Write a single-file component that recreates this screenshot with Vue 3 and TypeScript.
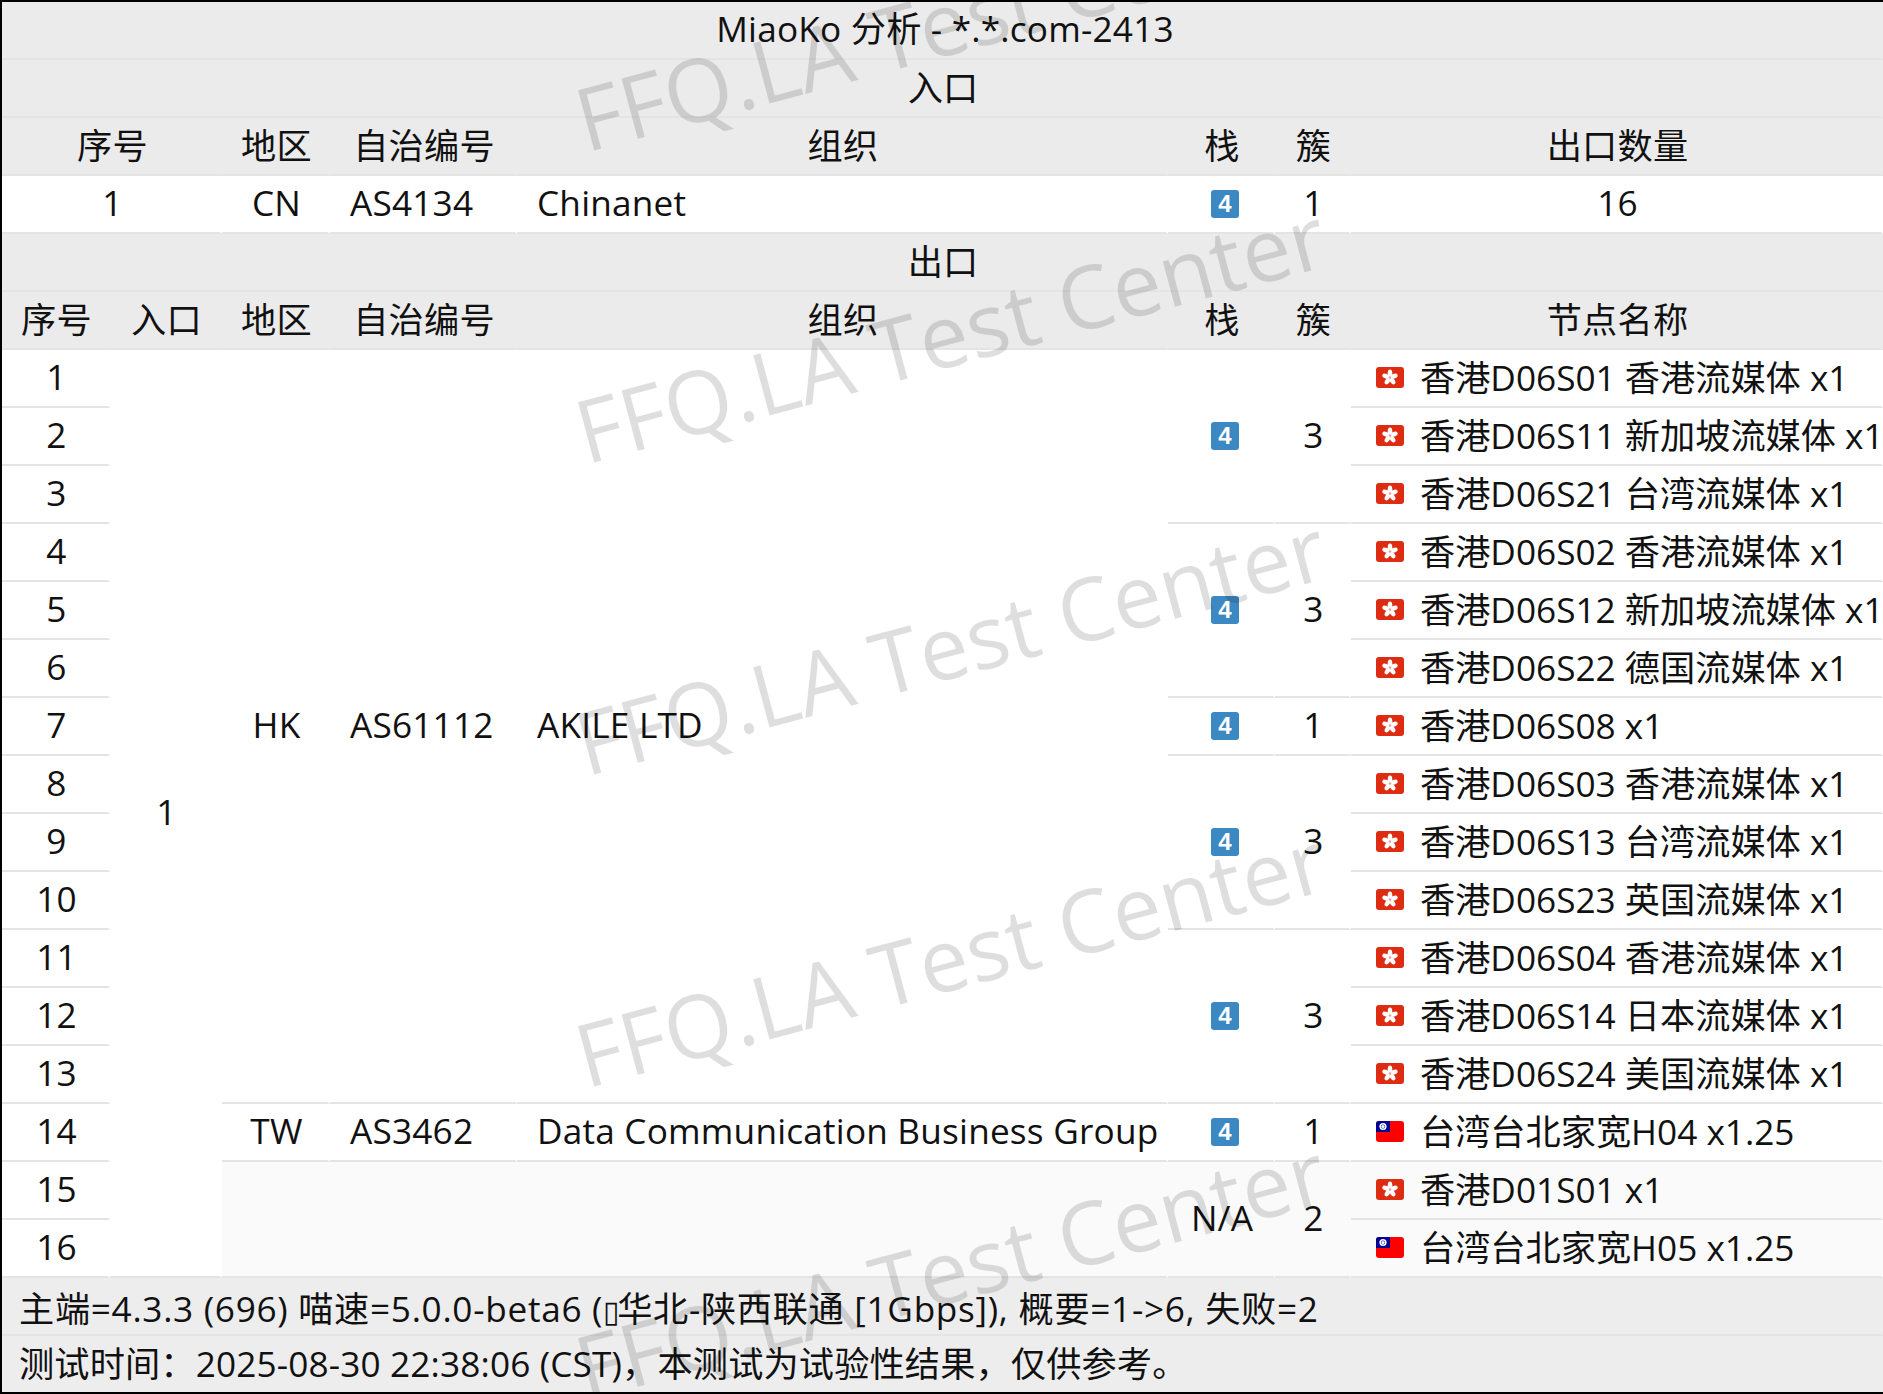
<script setup lang="ts">
type Flag = 'hk' | 'tw'
interface Node { id: number; flag: Flag; name: string }

const names: [Flag, string][] = [
  ['hk', '香港D06S01 香港流媒体 x1'],
  ['hk', '香港D06S11 新加坡流媒体 x1'],
  ['hk', '香港D06S21 台湾流媒体 x1'],
  ['hk', '香港D06S02 香港流媒体 x1'],
  ['hk', '香港D06S12 新加坡流媒体 x1'],
  ['hk', '香港D06S22 德国流媒体 x1'],
  ['hk', '香港D06S08 x1'],
  ['hk', '香港D06S03 香港流媒体 x1'],
  ['hk', '香港D06S13 台湾流媒体 x1'],
  ['hk', '香港D06S23 英国流媒体 x1'],
  ['hk', '香港D06S04 香港流媒体 x1'],
  ['hk', '香港D06S14 日本流媒体 x1'],
  ['hk', '香港D06S24 美国流媒体 x1'],
  ['tw', '台湾台北家宽H04 x1.25'],
  ['hk', '香港D01S01 x1'],
  ['tw', '台湾台北家宽H05 x1.25']
]
const rows: Node[] = names.map(([flag, name], i) => ({ id: i + 1, flag, name }))

// rows at which the stack and cluster cells start, with their span
const groups: Record<number, { span: number; stack: string; cluster: string }> = {
  1: { span: 3, stack: '4', cluster: '3' },
  4: { span: 3, stack: '4', cluster: '3' },
  7: { span: 1, stack: '4', cluster: '1' },
  8: { span: 3, stack: '4', cluster: '3' },
  11: { span: 3, stack: '4', cluster: '3' },
  14: { span: 1, stack: '4', cluster: '1' },
  15: { span: 2, stack: 'N/A', cluster: '2' }
}
const petals = [0, 72, 144, 216, 288]
const marks = [0, 1, 2, 3, 4]
</script>

<template>
  <div class="page">
    <table class="report">
      <colgroup>
        <col class="c-id" /><col class="c-in" /><col class="c-region" /><col class="c-as" />
        <col class="c-org" /><col class="c-stack" /><col class="c-cluster" /><col class="c-node" />
      </colgroup>
      <tbody>
        <tr class="bar title"><td colspan="8">MiaoKo 分析 - *.*.com-2413</td></tr>
        <tr class="bar"><td colspan="8">入口</td></tr>
        <tr class="bar">
          <td colspan="2">序号</td><td>地区</td><td>自治编号</td><td>组织</td><td>栈</td><td>簇</td><td>出口数量</td>
        </tr>
        <tr>
          <td colspan="2">1</td><td>CN</td><td class="left">AS4134</td><td class="left">Chinanet</td>
          <td><span class="key">4</span></td><td>1</td><td>16</td>
        </tr>
        <tr class="bar"><td colspan="8">出口</td></tr>
        <tr class="bar">
          <td>序号</td><td>入口</td><td>地区</td><td>自治编号</td><td>组织</td><td>栈</td><td>簇</td><td>节点名称</td>
        </tr>
        <tr v-for="r in rows" :key="r.id">
          <td>{{ r.id }}</td>
          <td v-if="r.id === 1" rowspan="16">1</td>
          <template v-if="r.id === 1">
            <td rowspan="13">HK</td>
            <td rowspan="13" class="left">AS61112</td>
            <td rowspan="13" class="left">AKILE LTD</td>
          </template>
          <template v-else-if="r.id === 14">
            <td>TW</td>
            <td class="left">AS3462</td>
            <td class="left">Data Communication Business Group</td>
          </template>
          <td v-else-if="r.id === 15" rowspan="2" colspan="3" class="dim"></td>
          <template v-if="groups[r.id]">
            <td :rowspan="groups[r.id].span" :class="{ dim: r.id === 15 }">
              <span v-if="groups[r.id].stack === '4'" class="key">4</span>
              <template v-else>{{ groups[r.id].stack }}</template>
            </td>
            <td :rowspan="groups[r.id].span" :class="{ dim: r.id === 15 }">{{ groups[r.id].cluster }}</td>
          </template>
          <td class="node" :class="{ dim: r.id > 14 }">
            <span class="node-wrap">
              <svg class="flag" viewBox="0 0 28 21" aria-hidden="true">
                <template v-if="r.flag === 'hk'">
                  <rect width="28" height="21" rx="3" fill="#dd2c12" />
                  <ellipse
                    v-for="a in petals"
                    :key="a"
                    cx="14"
                    cy="6.4"
                    rx="2.3"
                    ry="3.9"
                    fill="#fff"
                    :transform="`rotate(${a} 14 10.5)`"
                  />
                  <circle cx="14" cy="10.5" r="1.3" fill="#f0a090" />
                </template>
                <template v-else>
                  <rect width="28" height="21" rx="3" fill="#fe0000" />
                  <path d="M3 0h11v11H0V3a3 3 0 0 1 3-3z" fill="#000095" />
                  <circle cx="7" cy="5.5" r="3.6" fill="#fff" />
                  <circle cx="7" cy="5.5" r="2" fill="#000095" />
                  <circle cx="7" cy="5.5" r="1.6" fill="#fff" />
                </template>
              </svg>
              {{ r.name }}
            </span>
          </td>
        </tr>
        <tr class="bar foot wide">
          <td colspan="8">主端=4.3.3 (696) 喵速=5.0.0-beta6 (<span class="tofu">▯</span>华北-陕西联通 [1Gbps]), 概要=1-&gt;6, 失败=2</td>
        </tr>
        <tr class="bar foot">
          <td colspan="8">测试时间：2025-08-30 22:38:06 (CST)，本测试为试验性结果，仅供参考。</td>
        </tr>
      </tbody>
    </table>
    <div class="marks" aria-hidden="true">
      <div v-for="m in marks" :key="m" class="mark">FFQ.LA Test Center</div>
    </div>
  </div>
</template>

<style scoped>
.page {
  position: relative;
  width: 1883px;
  height: 1394px;
  box-sizing: border-box;
  border-style: solid;
  border-color: #000;
  border-width: 2px 0 2px 2px;
  overflow: hidden;
  background: #fff;
  color: #111;
  font-family: "Open Sans", "Noto Sans CJK SC", sans-serif;
  font-size: 35.2px;
  letter-spacing: 0.2px;
}
.report {
  width: 1881px;
  table-layout: fixed;
  border-collapse: separate;
  border-spacing: 0;
}
.c-id { width: 108px; }
.c-in { width: 112px; }
.c-region { width: 108px; }
.c-as { width: 187px; }
.c-org { width: 651px; }
.c-stack { width: 107px; }
.c-cluster { width: 76px; }
.c-node { width: 532px; }
td {
  box-sizing: border-box;
  height: 58px;
  padding: 0 0 4px 3px;
  text-align: center;
  vertical-align: middle;
  white-space: nowrap;
  line-height: 40px;
  border-bottom: 2px solid #e4e4e4;
  border-right: 2px solid transparent;
}
.bar td { background: #ebebeb; padding-bottom: 2px; }
.title td { padding-left: 7px; padding-bottom: 4px; }
.foot td { text-align: left; padding-left: 17px; background: #ededed; letter-spacing: 0.15px; }
.wide td { letter-spacing: 0.7px; padding-top: 3px; padding-bottom: 0; }
.tofu { font-size: 30px; line-height: 1; letter-spacing: -3px; }
.left { text-align: left; padding-left: 20px; }
.dim { background: #fafafa; }
.node { text-align: left; padding: 0 0 5px 25px; letter-spacing: 0; }
.node-wrap { display: inline-flex; align-items: center; gap: 16px; }
.flag { width: 28px; height: 21px; flex: none; margin-top: 2px; }
.key {
  display: inline-block;
  width: 28px;
  height: 28px;
  margin-left: 6px;
  margin-bottom: 4px;
  border-radius: 3px;
  background: #3b88c3;
  color: #fff;
  font-family: "Liberation Sans", sans-serif;
  font-size: 24px;
  font-weight: 700;
  line-height: 28px;
  letter-spacing: 0;
  vertical-align: middle;
}
.marks {
  position: absolute;
  inset: -40px 0 0 0;
  pointer-events: none;
  overflow: hidden;
  display: flex;
  flex-direction: column;
  align-items: flex-start;
  gap: 202px;
  padding: 3px 0 0 562px;
}
.mark {
  flex: none;
  height: 110px;
  line-height: 110px;
  font-size: 87.5px;
  letter-spacing: 0;
  color: rgba(0, 0, 0, 0.13);
  white-space: nowrap;
  transform: rotate(-15deg);
}
</style>
